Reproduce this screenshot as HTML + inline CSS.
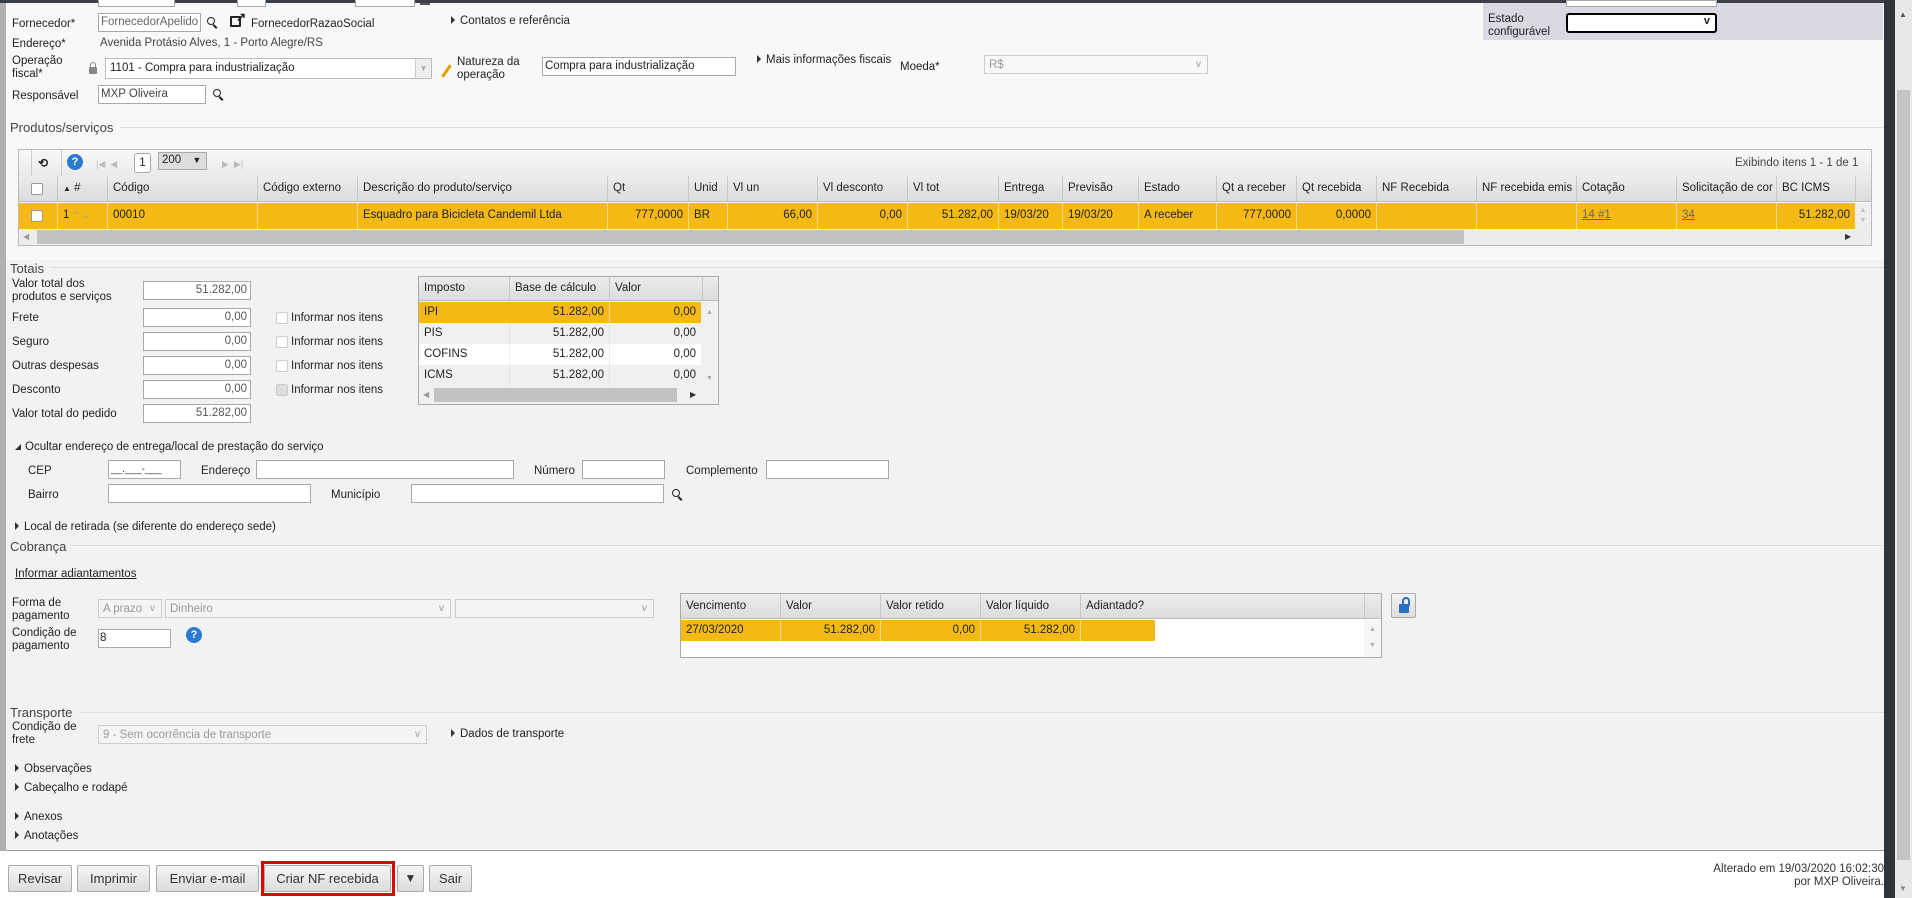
<!DOCTYPE html>
<html><head><meta charset="utf-8"><style>
*{box-sizing:border-box;margin:0;padding:0}
body{width:1912px;height:898px;overflow:hidden;background:#fff;font-family:"Liberation Sans",sans-serif;font-size:11.5px;color:#222;position:relative}
.a{position:absolute}
.t{position:absolute;white-space:nowrap;line-height:14px}
.in{position:absolute;background:#fff;border:1px solid #a9a9a9}
.sel{position:absolute;background:#f4f4f4;border:1px solid #ccc;color:#999;padding:2px 4px;line-height:14px}
.sel:after{content:"v";position:absolute;right:6px;top:2px;color:#999;font-size:10px}
.tri{display:inline-block;width:0;height:0;border-left:4px solid #333;border-top:4px solid transparent;border-bottom:4px solid transparent;margin-right:5px;vertical-align:0}
.tri2{display:inline-block;width:0;height:0;border-bottom:6px solid #333;border-left:6px solid transparent;margin-right:4px}
.hdr{position:absolute;background:linear-gradient(#ececec,#dcdcdc);border-bottom:1px solid #bbb}
.c{position:absolute;top:0;height:100%;border-left:1px solid #c8c8c8;padding:0 5px;line-height:25px;white-space:nowrap;overflow:hidden}
.r{text-align:right}
.line{position:absolute;height:1px;background:#ddd}
.btn{position:absolute;top:865px;height:27px;background:linear-gradient(#f4f4f4,#dcdcdc);border:1px solid #aaa;border-radius:2px;line-height:25px;text-align:center;font-size:13px;color:#333}
.cb{position:absolute;width:12px;height:12px;border:1px solid #ccc;background:#fff;border-radius:2px}
.mag{position:absolute;width:8px;height:8px;border:1.5px solid #222;border-radius:50%}
.mag:after{content:"";position:absolute;left:6px;top:6px;width:2px;height:5px;background:#222;transform:rotate(-45deg)}
</style></head><body>
<!-- frame -->
<div class="a" style="left:0;top:0;width:6px;height:851px;background:#b0b0b0"></div>
<div class="a" style="left:6px;top:0;width:1878px;height:851px;background:#f2f2f2;border-bottom:1px solid #999"></div>
<div class="a" style="left:6px;top:0;width:1878px;height:260px;background:#f7f8f8"></div>
<div class="a" style="left:0;top:0;width:1912px;height:3px;background:#3a3f48"></div>
<div class="a" style="left:1884px;top:0;width:11px;height:898px;background:#2f333a"></div>
<div class="a" style="left:1895px;top:0;width:17px;height:898px;background:#e8e8e8"></div>
<div class="a" style="left:1897px;top:90px;width:13px;height:770px;background:#c4c4c4"></div>
<div class="t" style="left:1899px;top:8px;font-size:8px;color:#555">▲</div>
<div class="t" style="left:1899px;top:882px;font-size:8px;color:#888">▼</div>

<!-- top partial -->
<div class="in" style="left:98px;top:-2px;width:77px;height:9px"></div>
<div class="in" style="left:237px;top:-2px;width:29px;height:9px"></div>
<div class="in" style="left:355px;top:-2px;width:60px;height:9px"></div>
<div class="a" style="left:420px;top:3px;width:10px;height:2px;background:#555"></div>

<div class="a" style="left:1483px;top:3px;width:400px;height:37px;background:#d9d9e3"></div>
<div class="in" style="left:1566px;top:0;width:151px;height:7px"></div>
<div class="t" style="left:1488px;top:13px;line-height:13px">Estado<br>configurável</div>
<div class="a" style="left:1566px;top:13px;width:151px;height:20px;background:#fff;border:2px solid #000;border-radius:3px"><span style="position:absolute;right:5px;top:0;font-weight:bold;font-size:11px">v</span></div>

<div class="t" style="left:12px;top:17px">Fornecedor*</div>
<div class="in" style="left:98px;top:13px;width:103px;height:19px;color:#666;padding:2px 2px">FornecedorApelido</div>
<div class="mag" style="left:207px;top:17px"></div>
<div class="a" style="left:230px;top:16px;width:11px;height:11px;border:2px solid #222;border-radius:1px"></div>
<div class="t" style="left:236px;top:10px;font-weight:bold;font-size:12px">↗</div>
<div class="t" style="left:251px;top:17px">FornecedorRazaoSocial</div>
<div class="t" style="left:451px;top:14px"><span class="tri"></span>Contatos e referência</div>

<div class="t" style="left:12px;top:37px">Endereço*</div>
<div class="t" style="left:100px;top:36px;color:#444">Avenida Protásio Alves, 1 - Porto Alegre/RS</div>

<div class="t" style="left:12px;top:55px;line-height:13px">Operação<br>fiscal*</div>
<div class="a" style="left:89px;top:67px;width:8px;height:7px;background:#888;border-radius:1px"></div>
<div class="a" style="left:90px;top:62px;width:6px;height:7px;border:1.5px solid #888;border-radius:3px 3px 0 0"></div>
<div class="in" style="left:105px;top:58px;width:327px;height:21px;border-color:#bbb;padding:3px 4px">1101 - Compra para industrialização</div>
<div class="a" style="left:415px;top:59px;width:16px;height:19px;background:#eee;border-left:1px solid #ccc;color:#aaa;font-size:8px;text-align:center;line-height:19px">▼</div>
<div class="a" style="left:445px;top:64px;width:3px;height:14px;background:#e8a000;transform:rotate(35deg)"></div>
<div class="t" style="left:457px;top:56px;line-height:13px">Natureza da<br>operação</div>
<div class="in" style="left:542px;top:57px;width:194px;height:19px;padding:2px 2px">Compra para industrialização</div>
<div class="t" style="left:757px;top:53px"><span class="tri"></span>Mais informações fiscais</div>
<div class="t" style="left:900px;top:60px">Moeda*</div>
<div class="sel" style="left:984px;top:55px;width:224px;height:19px;background:#f7f8f8">R$</div>

<div class="t" style="left:12px;top:89px">Responsável</div>
<div class="in" style="left:98px;top:85px;width:108px;height:19px;padding:2px 2px;color:#444">MXP Oliveira</div>
<div class="mag" style="left:213px;top:89px"></div>

<div class="t" style="left:10px;top:121px;font-size:13px;color:#444">Produtos/serviços</div>
<div class="line" style="left:120px;top:127px;width:1764px"></div>

<!-- grid -->
<div class="a" style="left:18px;top:149px;width:1854px;height:97px;border:1px solid #bbb;background:#fff"></div>
<div class="a" style="left:19px;top:150px;width:1852px;height:26px;background:linear-gradient(#f8f8f8,#eaeaea)"></div>
<div class="a" style="left:31px;top:150px;width:1px;height:26px;background:#ccc"></div>
<div class="a" style="left:61px;top:150px;width:1px;height:26px;background:#ccc"></div>
<div class="t" style="left:38px;top:156px;font-weight:bold;font-size:12px">⟲</div>
<div class="a" style="left:67px;top:154px;width:16px;height:16px;border-radius:50%;background:#2a7ad0;color:#fff;font-weight:bold;font-size:11px;text-align:center;line-height:16px">?</div>
<div class="t" style="left:96px;top:157px;color:#bbb;font-size:9px">|◀ &nbsp;◀</div>
<div class="a" style="left:134px;top:153px;width:17px;height:20px;border:1px solid #aaa;background:#fff;border-radius:3px;text-align:center;line-height:18px">1</div>
<div class="a" style="left:158px;top:152px;width:49px;height:18px;border:1px solid #aaa;background:#ddd;padding-left:3px;line-height:15px">200 <span style="font-size:9px;margin-left:8px">▼</span></div>
<div class="t" style="left:222px;top:157px;color:#bbb;font-size:9px">▶ &nbsp;▶|</div>
<div class="t" style="left:1735px;top:156px;color:#444">Exibindo itens 1 - 1 de 1</div>

<div class="hdr" style="left:19px;top:176px;width:1852px;height:26px">
<div class="c" style="left:0;width:38px;border:0"><span class="cb" style="left:12px;top:7px;border-color:#999"></span></div>
<div class="c" style="left:38px;width:50px"><span style="font-size:8px">▲</span> #</div>
<div class="c" style="left:88px;width:150px">Código</div>
<div class="c" style="left:238px;width:100px">Código externo</div>
<div class="c" style="left:338px;width:250px">Descrição do produto/serviço</div>
<div class="c" style="left:588px;width:81px">Qt</div>
<div class="c" style="left:669px;width:39px">Unid</div>
<div class="c" style="left:708px;width:90px">Vl un</div>
<div class="c" style="left:798px;width:90px">Vl desconto</div>
<div class="c" style="left:888px;width:91px">Vl tot</div>
<div class="c" style="left:979px;width:64px">Entrega</div>
<div class="c" style="left:1043px;width:76px">Previsão</div>
<div class="c" style="left:1119px;width:78px">Estado</div>
<div class="c" style="left:1197px;width:80px">Qt a receber</div>
<div class="c" style="left:1277px;width:80px">Qt recebida</div>
<div class="c" style="left:1357px;width:100px">NF Recebida</div>
<div class="c" style="left:1457px;width:100px">NF recebida emis</div>
<div class="c" style="left:1557px;width:100px">Cotação</div>
<div class="c" style="left:1657px;width:100px">Solicitação de cor</div>
<div class="c" style="left:1757px;width:79px">BC ICMS</div>
<div class="c" style="left:1836px;width:16px"></div>
</div>
<div class="a" style="left:19px;top:203px;width:1836px;height:26px;background:#f5b914">
<div class="c" style="left:0;width:38px;border:0"><span class="cb" style="left:12px;top:7px;border-color:#999"></span></div>
<div class="c" style="left:38px;width:50px;border-color:#f9d98a">1 <span style="color:#8aa;font-size:9px">⌃ ⌄</span></div>
<div class="c" style="left:88px;width:150px;border-color:#f9d98a">00010</div>
<div class="c" style="left:238px;width:100px;border-color:#f9d98a"></div>
<div class="c" style="left:338px;width:250px;border-color:#f9d98a">Esquadro para Bicicleta Candemil Ltda</div>
<div class="c r" style="left:588px;width:81px;border-color:#f9d98a">777,0000</div>
<div class="c" style="left:669px;width:39px;border-color:#f9d98a">BR</div>
<div class="c r" style="left:708px;width:90px;border-color:#f9d98a">66,00</div>
<div class="c r" style="left:798px;width:90px;border-color:#f9d98a">0,00</div>
<div class="c r" style="left:888px;width:91px;border-color:#f9d98a">51.282,00</div>
<div class="c" style="left:979px;width:64px;border-color:#f9d98a">19/03/20</div>
<div class="c" style="left:1043px;width:76px;border-color:#f9d98a">19/03/20</div>
<div class="c" style="left:1119px;width:78px;border-color:#f9d98a">A receber</div>
<div class="c r" style="left:1197px;width:80px;border-color:#f9d98a">777,0000</div>
<div class="c r" style="left:1277px;width:80px;border-color:#f9d98a">0,0000</div>
<div class="c" style="left:1357px;width:100px;border-color:#f9d98a"></div>
<div class="c" style="left:1457px;width:100px;border-color:#f9d98a"></div>
<div class="c" style="left:1557px;width:100px;border-color:#f9d98a;color:#666;text-decoration:underline">14 #1</div>
<div class="c" style="left:1657px;width:100px;border-color:#f9d98a;color:#666;text-decoration:underline">34</div>
<div class="c r" style="left:1757px;width:79px;border-color:#f9d98a">51.282,00</div>
</div>
<div class="a" style="left:1855px;top:203px;width:16px;height:26px;background:#eee;color:#bbb;font-size:7px;text-align:center;line-height:10px;padding-top:3px">▲<br>▼</div>
<div class="a" style="left:19px;top:229px;width:1852px;height:16px;background:#ececec"></div>
<div class="a" style="left:37px;top:230px;width:1427px;height:14px;background:#c2c2c2"></div>
<div class="t" style="left:23px;top:230px;font-size:8px;color:#999">◀</div>
<div class="t" style="left:1845px;top:230px;font-size:8px;color:#333">▶</div>

<!-- Totais -->
<div class="t" style="left:10px;top:262px;font-size:13px;color:#444">Totais</div>
<div class="line" style="left:50px;top:267px;width:1834px"></div>
<div class="t" style="left:12px;top:278px;line-height:13px">Valor total dos<br>produtos e serviços</div>
<div class="in r" style="left:143px;top:281px;width:108px;height:19px;padding:2px 3px;color:#555">51.282,00</div>
<div class="t" style="left:12px;top:311px">Frete</div>
<div class="in r" style="left:143px;top:308px;width:108px;height:19px;padding:2px 3px;color:#555">0,00</div>
<div class="t" style="left:12px;top:335px">Seguro</div>
<div class="in r" style="left:143px;top:332px;width:108px;height:19px;padding:2px 3px;color:#555">0,00</div>
<div class="t" style="left:12px;top:359px">Outras despesas</div>
<div class="in r" style="left:143px;top:356px;width:108px;height:19px;padding:2px 3px;color:#555">0,00</div>
<div class="t" style="left:12px;top:383px">Desconto</div>
<div class="in r" style="left:143px;top:380px;width:108px;height:19px;padding:2px 3px;color:#555">0,00</div>
<div class="t" style="left:12px;top:407px">Valor total do pedido</div>
<div class="in r" style="left:143px;top:404px;width:108px;height:19px;padding:2px 3px;color:#555">51.282,00</div>
<div class="cb" style="left:276px;top:312px"></div><div class="t" style="left:291px;top:311px">Informar nos itens</div>
<div class="cb" style="left:276px;top:336px"></div><div class="t" style="left:291px;top:335px">Informar nos itens</div>
<div class="cb" style="left:276px;top:360px"></div><div class="t" style="left:291px;top:359px">Informar nos itens</div>
<div class="cb" style="left:276px;top:384px;background:#ddd"></div><div class="t" style="left:291px;top:383px">Informar nos itens</div>

<div class="a" style="left:418px;top:276px;width:301px;height:129px;border:1px solid #aaa;background:#f0f0f0"></div>
<div class="hdr" style="left:419px;top:277px;width:299px;height:24px">
<div class="c" style="left:0;width:90px;border:0;line-height:23px">Imposto</div>
<div class="c" style="left:90px;width:100px;line-height:23px">Base de cálculo</div>
<div class="c" style="left:190px;width:93px;line-height:23px">Valor</div>
<div class="c" style="left:283px;width:16px"></div></div>
<div class="a" style="left:419px;top:302px;width:282px;height:21px;background:#f5b914">
<div class="c" style="left:0;width:90px;border:0;line-height:21px">IPI</div><div class="c r" style="left:90px;width:100px;border-color:#f5b914;line-height:21px">51.282,00</div><div class="c r" style="left:190px;width:92px;border-color:#f9d98a;line-height:21px">0,00</div></div>
<div class="a" style="left:419px;top:323px;width:282px;height:21px;background:#f0f0f0">
<div class="c" style="left:0;width:90px;border:0;line-height:21px">PIS</div><div class="c r" style="left:90px;width:100px;line-height:21px;border-color:#e4e4e4">51.282,00</div><div class="c r" style="left:190px;width:92px;line-height:21px;border-color:#e4e4e4">0,00</div></div>
<div class="a" style="left:419px;top:344px;width:282px;height:21px;background:#fff">
<div class="c" style="left:0;width:90px;border:0;line-height:21px">COFINS</div><div class="c r" style="left:90px;width:100px;line-height:21px;border-color:#eee">51.282,00</div><div class="c r" style="left:190px;width:92px;line-height:21px;border-color:#eee">0,00</div></div>
<div class="a" style="left:419px;top:365px;width:282px;height:21px;background:#f0f0f0">
<div class="c" style="left:0;width:90px;border:0;line-height:21px">ICMS</div><div class="c r" style="left:90px;width:100px;line-height:21px;border-color:#e4e4e4">51.282,00</div><div class="c r" style="left:190px;width:92px;line-height:21px;border-color:#e4e4e4">0,00</div></div>
<div class="t" style="left:706px;top:306px;font-size:7px;color:#aaa">▲</div>
<div class="t" style="left:706px;top:372px;font-size:7px;color:#aaa">▼</div>
<div class="a" style="left:434px;top:388px;width:243px;height:14px;background:#c2c2c2"></div>
<div class="t" style="left:423px;top:388px;font-size:8px;color:#999">◀</div>
<div class="t" style="left:690px;top:388px;font-size:8px;color:#333">▶</div>

<!-- endereço -->
<div class="t" style="left:15px;top:440px"><span class="tri2"></span>Ocultar endereço de entrega/local de prestação do serviço</div>
<div class="t" style="left:28px;top:464px">CEP</div>
<div class="in" style="left:108px;top:460px;width:73px;height:19px;padding:3px 2px;color:#333;font-size:10px">__.___-___</div>
<div class="t" style="left:201px;top:464px">Endereço</div>
<div class="in" style="left:256px;top:460px;width:258px;height:19px"></div>
<div class="t" style="left:534px;top:464px">Número</div>
<div class="in" style="left:582px;top:460px;width:83px;height:19px"></div>
<div class="t" style="left:686px;top:464px">Complemento</div>
<div class="in" style="left:766px;top:460px;width:123px;height:19px"></div>
<div class="t" style="left:28px;top:488px">Bairro</div>
<div class="in" style="left:108px;top:484px;width:203px;height:19px"></div>
<div class="t" style="left:331px;top:488px">Município</div>
<div class="in" style="left:411px;top:484px;width:253px;height:19px"></div>
<div class="mag" style="left:672px;top:489px"></div>
<div class="t" style="left:15px;top:520px"><span class="tri"></span>Local de retirada (se diferente do endereço sede)</div>

<!-- Cobrança -->
<div class="t" style="left:10px;top:540px;font-size:13px;color:#444">Cobrança</div>
<div class="line" style="left:70px;top:545px;width:1814px"></div>
<div class="t" style="left:15px;top:567px;text-decoration:underline">Informar adiantamentos</div>
<div class="t" style="left:12px;top:597px;line-height:13px">Forma de<br>pagamento</div>
<div class="sel" style="left:98px;top:599px;width:64px;height:19px">A prazo</div>
<div class="sel" style="left:165px;top:599px;width:286px;height:19px">Dinheiro</div>
<div class="sel" style="left:455px;top:599px;width:199px;height:19px"></div>
<div class="t" style="left:12px;top:627px;line-height:13px">Condição de<br>pagamento</div>
<div class="in" style="left:98px;top:629px;width:73px;height:19px;padding:2px 1px">8</div>
<div class="a" style="left:186px;top:627px;width:16px;height:16px;border-radius:50%;background:#2a7ad0;color:#fff;font-weight:bold;font-size:11px;text-align:center;line-height:16px">?</div>

<div class="a" style="left:680px;top:593px;width:702px;height:65px;border:1px solid #aaa;background:#fff"></div>
<div class="hdr" style="left:681px;top:594px;width:700px;height:25px">
<div class="c" style="left:0;width:99px;border:0;line-height:24px">Vencimento</div>
<div class="c" style="left:99px;width:100px;line-height:24px">Valor</div>
<div class="c" style="left:199px;width:100px;line-height:24px">Valor retido</div>
<div class="c" style="left:299px;width:100px;line-height:24px">Valor líquido</div>
<div class="c" style="left:399px;width:284px;line-height:24px">Adiantado?</div>
<div class="c" style="left:683px;width:17px"></div></div>
<div class="a" style="left:681px;top:620px;width:474px;height:21px;background:#f5b914">
<div class="c" style="left:0;width:99px;border:0;line-height:21px">27/03/2020</div>
<div class="c r" style="left:99px;width:100px;line-height:21px;border-color:#f9d98a">51.282,00</div>
<div class="c r" style="left:199px;width:100px;line-height:21px;border-color:#f9d98a">0,00</div>
<div class="c r" style="left:299px;width:100px;line-height:21px;border-color:#f9d98a">51.282,00</div>
<div class="c" style="left:399px;width:75px;line-height:21px;border-color:#f9d98a"></div></div>
<div class="a" style="left:1364px;top:620px;width:17px;height:37px;background:#f6f6f6;color:#aaa;font-size:7px;text-align:center;line-height:16px;padding-top:2px">▲<br>▼</div>
<div class="a" style="left:1391px;top:593px;width:25px;height:25px;border:1px solid #aaa;border-radius:2px;background:linear-gradient(#f4f4f4,#ddd)"><div class="a" style="left:7px;top:10px;width:10px;height:9px;background:#2a6fc0;border-radius:1px"></div><div class="a" style="left:10px;top:3px;width:8px;height:9px;border:2px solid #2a6fc0;border-bottom:0;border-radius:4px 4px 0 0"></div></div>

<!-- Transporte -->
<div class="t" style="left:10px;top:706px;font-size:13px;color:#444">Transporte</div>
<div class="line" style="left:80px;top:712px;width:1804px"></div>
<div class="t" style="left:12px;top:721px;line-height:13px">Condição de<br>frete</div>
<div class="sel" style="left:98px;top:725px;width:329px;height:19px">9 - Sem ocorrência de transporte</div>
<div class="t" style="left:451px;top:727px"><span class="tri"></span>Dados de transporte</div>
<div class="t" style="left:15px;top:762px"><span class="tri"></span>Observações</div>
<div class="t" style="left:15px;top:781px"><span class="tri"></span>Cabeçalho e rodapé</div>
<div class="t" style="left:15px;top:810px"><span class="tri"></span>Anexos</div>
<div class="t" style="left:15px;top:829px"><span class="tri"></span>Anotações</div>

<!-- buttons -->
<div class="btn" style="left:8px;width:64px">Revisar</div>
<div class="btn" style="left:77px;width:73px">Imprimir</div>
<div class="btn" style="left:156px;width:103px">Enviar e-mail</div>
<div class="btn" style="left:264px;width:127px">Criar NF recebida</div>
<div class="a" style="left:261px;top:861px;width:134px;height:35px;border:3px solid #e00000"></div>
<div class="btn" style="left:397px;width:27px;font-size:12px">▼</div>
<div class="btn" style="left:429px;width:43px">Sair</div>
<div class="t" style="right:28px;top:863px;text-align:right;line-height:13px;color:#333">Alterado em 19/03/2020 16:02:30<br>por MXP Oliveira.</div>
</body></html>
